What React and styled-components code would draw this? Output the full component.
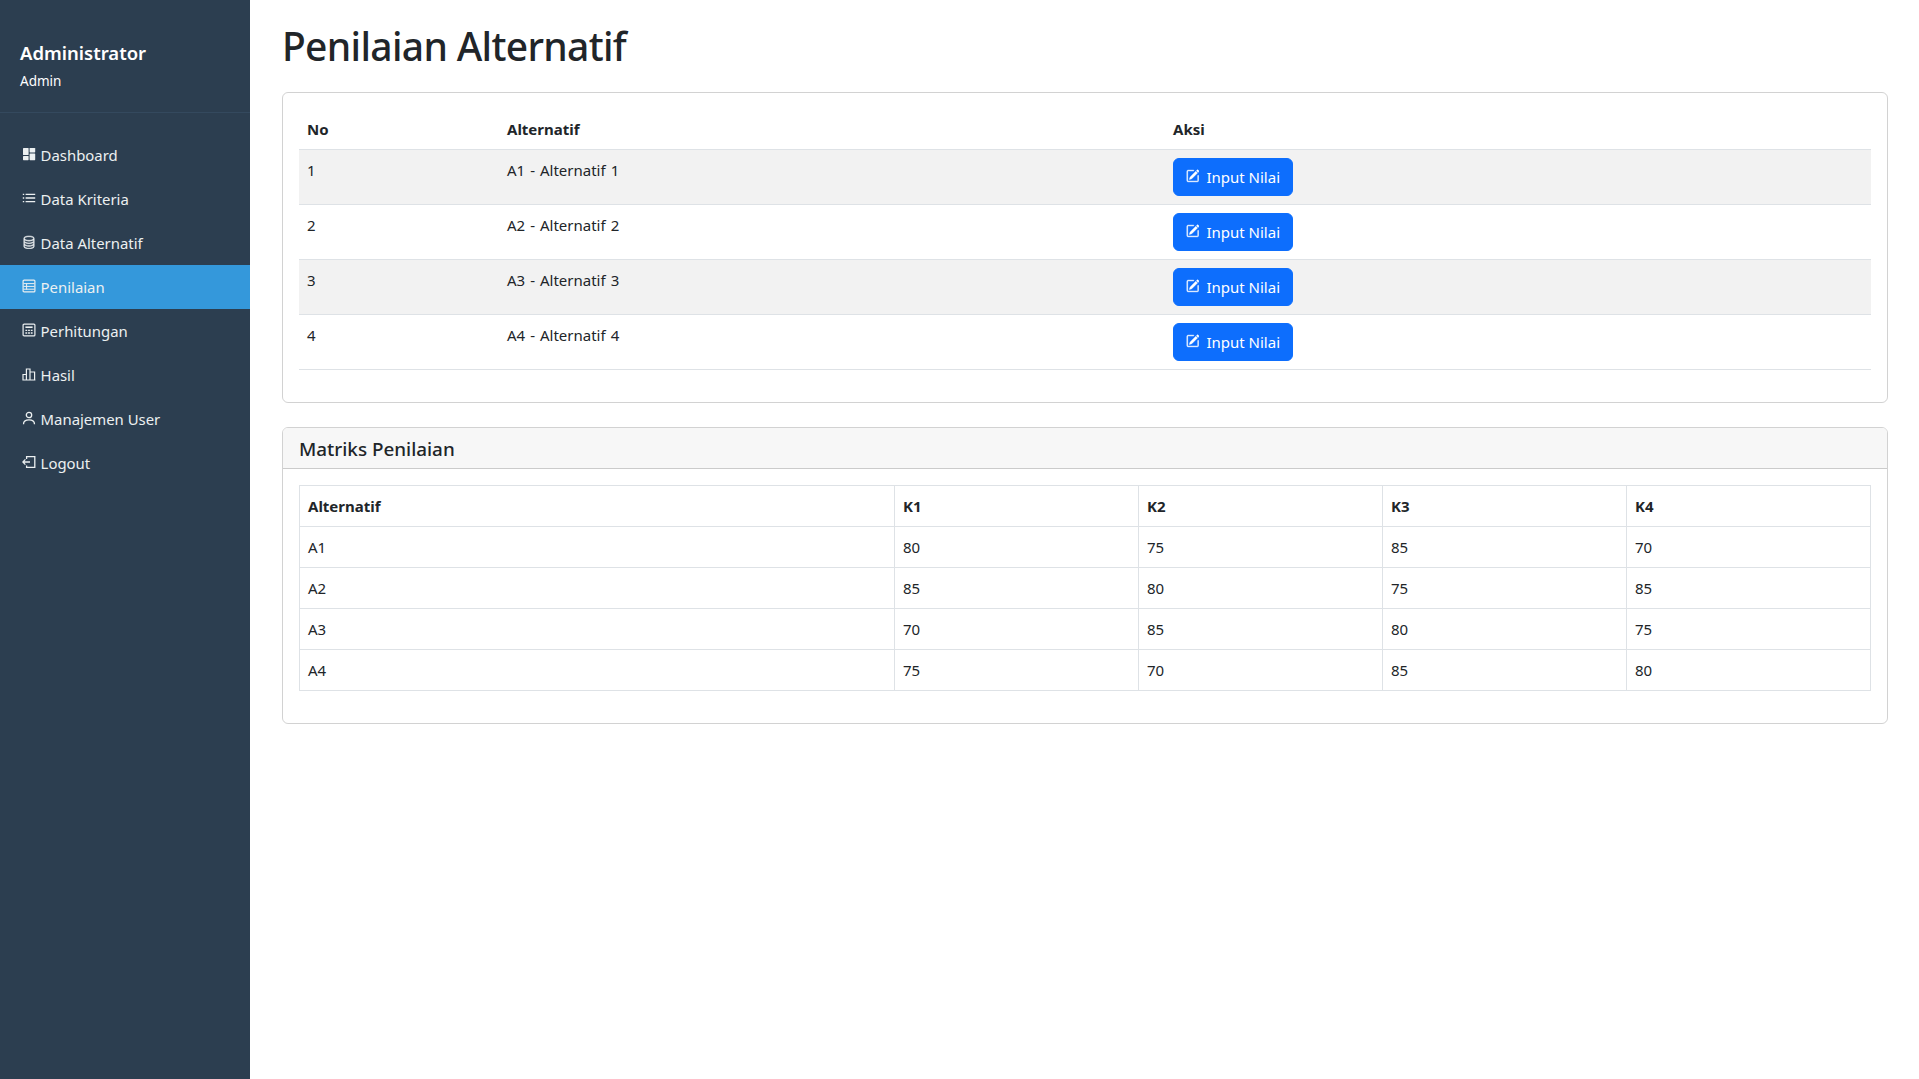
import React from "react"
import styled, { createGlobalStyle } from "styled-components"
import { BsDatabase, BsPencilSquare } from "react-icons/bs"

const DashboardIcon = () => (
  <svg width="14" height="14" viewBox="0 0 14 14" fill="currentColor">
    <rect x="1" y="1" width="5.6" height="7" rx="0.6" />
    <rect x="7.6" y="1" width="5.6" height="4.4" rx="0.6" />
    <rect x="1" y="9" width="5.6" height="4.2" rx="0.6" />
    <rect x="7.6" y="6.4" width="5.6" height="6.8" rx="0.6" />
  </svg>
)

const ListIcon = () => (
  <svg width="14" height="14" viewBox="0 0 14 14" fill="none" stroke="currentColor" strokeWidth="1.4">
    <path d="M3.6 3.4h9.6M3.6 7h9.6M3.6 10.6h9.6" />
    <path d="M.8 3.4h1.4M.8 7h1.4M.8 10.6h1.4" />
  </svg>
)

const SheetIcon = () => (
  <svg width="14" height="14" viewBox="0 0 14 14" fill="none" stroke="currentColor" strokeWidth="1.2">
    <rect x="1.1" y="1.1" width="11.8" height="11.8" rx="1" />
    <path d="M1.5 4.6h11M1.5 7.4h11M1.5 10.2h11M4.6 4.6v6" strokeWidth="1" />
  </svg>
)

const CalculatorIcon = () => (
  <svg width="14" height="14" viewBox="0 0 14 14" fill="none" stroke="currentColor" strokeWidth="1.2">
    <rect x="1.1" y="1.1" width="11.8" height="11.8" rx="1" />
    <path d="M3.4 4.2h7.2" strokeWidth="1.6" />
    <path d="M3.4 7.4h7.2M3.4 10h7.2" strokeWidth="1.3" strokeDasharray="1.8 .9" />
  </svg>
)

const ChartIcon = () => (
  <svg width="14" height="14" viewBox="0 0 14 14" fill="none" stroke="currentColor" strokeWidth="1.2">
    <path d="M1 13V7.5h3.4V13M4.4 13V2h3.6v11M8 13V5h4.6v8M.4 13h13" />
  </svg>
)

const PersonIcon = () => (
  <svg width="14" height="14" viewBox="0 0 14 14" fill="none" stroke="currentColor" strokeWidth="1.3">
    <circle cx="7" cy="4" r="2.7" />
    <path d="M1.5 13.2c0-3 2.2-4.4 5.5-4.4s5.5 1.4 5.5 4.4" />
  </svg>
)

const LogoutIcon = () => (
  <svg width="14" height="14" viewBox="0 0 14 14" fill="none" stroke="currentColor" strokeWidth="1.3">
    <path d="M4.6 4V1.6h8.2v10.8H4.6V10.4" />
    <path d="M8 7H.9M3.4 4.4L.8 7l2.6 2.6" />
  </svg>
)

const menuItems = [
  { label: "Dashboard", icon: DashboardIcon },
  { label: "Data Kriteria", icon: ListIcon },
  { label: "Data Alternatif", icon: BsDatabase },
  { label: "Penilaian", icon: SheetIcon, active: true },
  { label: "Perhitungan", icon: CalculatorIcon },
  { label: "Hasil", icon: ChartIcon },
  { label: "Manajemen User", icon: PersonIcon },
  { label: "Logout", icon: LogoutIcon },
]

const alternatives = [
  { no: 1, name: "A1 - Alternatif 1" },
  { no: 2, name: "A2 - Alternatif 2" },
  { no: 3, name: "A3 - Alternatif 3" },
  { no: 4, name: "A4 - Alternatif 4" },
]

const matrix = [
  ["A1", 80, 75, 85, 70],
  ["A2", 85, 80, 75, 85],
  ["A3", 70, 85, 80, 75],
  ["A4", 75, 70, 85, 80],
]

const App = () => (
  <>
    <GlobalStyle />
    <Layout>
      <Sidebar>
        <SidebarHeader>
          <UserName>Administrator</UserName>
          <UserRole>Admin</UserRole>
        </SidebarHeader>
        <Menu>
          {menuItems.map(({ label, icon: Icon, active }) => (
            <MenuItem key={label} $active={active}>
              <MenuIcon>
                <Icon size={14} />
              </MenuIcon>
              {label}
            </MenuItem>
          ))}
        </Menu>
      </Sidebar>

      <Main>
        <PageTitle>Penilaian Alternatif</PageTitle>

        <Card>
          <CardBody>
            <Table>
              <thead>
                <tr>
                  <HeadCell $width={200}>No</HeadCell>
                  <HeadCell $width={666}>Alternatif</HeadCell>
                  <HeadCell>Aksi</HeadCell>
                </tr>
              </thead>
              <tbody>
                {alternatives.map(item => (
                  <StripedRow key={item.no}>
                    <Cell>{item.no}</Cell>
                    <NameCell>{item.name}</NameCell>
                    <Cell>
                      <InputButton>
                        <BsPencilSquare size={14} />
                        Input Nilai
                      </InputButton>
                    </Cell>
                  </StripedRow>
                ))}
              </tbody>
            </Table>
          </CardBody>
        </Card>

        <Card>
          <CardHeader>
            <CardTitle>Matriks Penilaian</CardTitle>
          </CardHeader>
          <CardBody>
            <Table>
              <thead>
                <tr>
                  <BorderedHead $width={595}>Alternatif</BorderedHead>
                  <BorderedHead $width={244}>K1</BorderedHead>
                  <BorderedHead $width={244}>K2</BorderedHead>
                  <BorderedHead $width={244}>K3</BorderedHead>
                  <BorderedHead>K4</BorderedHead>
                </tr>
              </thead>
              <tbody>
                {matrix.map(row => (
                  <tr key={row[0]}>
                    {row.map((value, i) => (
                      <BorderedCell key={i}>{value}</BorderedCell>
                    ))}
                  </tr>
                ))}
              </tbody>
            </Table>
          </CardBody>
        </Card>
      </Main>
    </Layout>
  </>
)

const GlobalStyle = createGlobalStyle`
  html, body {
    margin: 0;
    padding: 0;
    background: #fff;
  }
  body {
    font-family: "Noto Sans", "Open Sans", sans-serif;
    font-size: 15px;
    line-height: 24px;
    color: #212529;
  }
  * {
    box-sizing: border-box;
  }
`

const Layout = styled.div`
  display: flex;
  min-height: 1079px;
`

const Sidebar = styled.aside`
  flex: 0 0 250px;
  background: #2c3e50;
  color: #fff;
`

const SidebarHeader = styled.div`
  height: 113px;
  padding: 40px 20px 0;
  border-bottom: 1px solid #34495e;
`

const UserName = styled.div`
  font-size: 18.5px;
  font-weight: 600;
  line-height: 26px;
`

const UserRole = styled.div`
  margin-top: 6px;
  font-size: 13.5px;
  line-height: 18px;
`

const Menu = styled.nav`
  display: flex;
  flex-direction: column;
  padding-top: 20px;
`

const MenuItem = styled.a`
  display: flex;
  align-items: center;
  gap: 4.6px;
  height: 44px;
  padding: 0 22px;
  font-size: 14.9px;
  color: #ecf0f1;
  background: ${props => (props.$active ? "#3498db" : "transparent")};
`

const MenuIcon = styled.span`
  display: flex;
  width: 14px;
  height: 14px;
  margin-top: -3px;

  svg[viewBox="0 0 16 16"] {
    stroke: currentColor;
    stroke-width: 0.5;
  }
`

const Main = styled.main`
  flex: 1;
  min-width: 0;
  padding: 22px 31px 20px 32px;
`

const PageTitle = styled.h1`
  margin: 0 0 22px;
  font-size: 39px;
  font-weight: 500;
  line-height: 48px;
  letter-spacing: -0.67px;
  color: #212529;
`

const Card = styled.section`
  margin-bottom: 24px;
  border: 1px solid rgba(0, 0, 0, 0.176);
  border-radius: 6px;
  overflow: hidden;
`

const CardHeader = styled.div`
  padding: 9px 16px 7px;
  background: #f7f7f7;
  border-bottom: 1px solid rgba(0, 0, 0, 0.176);
`

const CardTitle = styled.h5`
  margin: 0;
  font-size: 18.85px;
  font-weight: 500;
  line-height: 24px;
`

const CardBody = styled.div`
  padding: 16px;
`

const Table = styled.table`
  width: 100%;
  margin-bottom: 16px;
  border-collapse: collapse;
  table-layout: fixed;
`

const HeadCell = styled.th`
  width: ${props => (props.$width ? `${props.$width}px` : "auto")};
  padding: 8px;
  font-weight: 700;
  text-align: left;
  border-bottom: 1px solid #dee2e6;
`

const StripedRow = styled.tr`
  &:nth-child(odd) {
    background: #f2f2f2;
  }
`

const Cell = styled.td`
  padding: 8px;
  vertical-align: top;
  border-bottom: 1px solid #dee2e6;
`

const NameCell = styled(Cell)`
  word-spacing: 1.1px;
`

const BorderedHead = styled(HeadCell)`
  border: 1px solid #dee2e6;
`

const BorderedCell = styled(Cell)`
  border: 1px solid #dee2e6;
`

const InputButton = styled.button`
  display: inline-flex;
  align-items: center;
  gap: 7px;
  width: 120px;
  height: 38px;
  padding: 0 12px;
  font-family: inherit;
  font-size: 15px;
  white-space: nowrap;
  color: #fff;
  background: #0d6efd;
  border: 1px solid #0d6efd;
  border-radius: 6px;

  svg {
    margin-top: -3px;
    stroke: currentColor;
    stroke-width: 0.5;
  }
`

export default App
